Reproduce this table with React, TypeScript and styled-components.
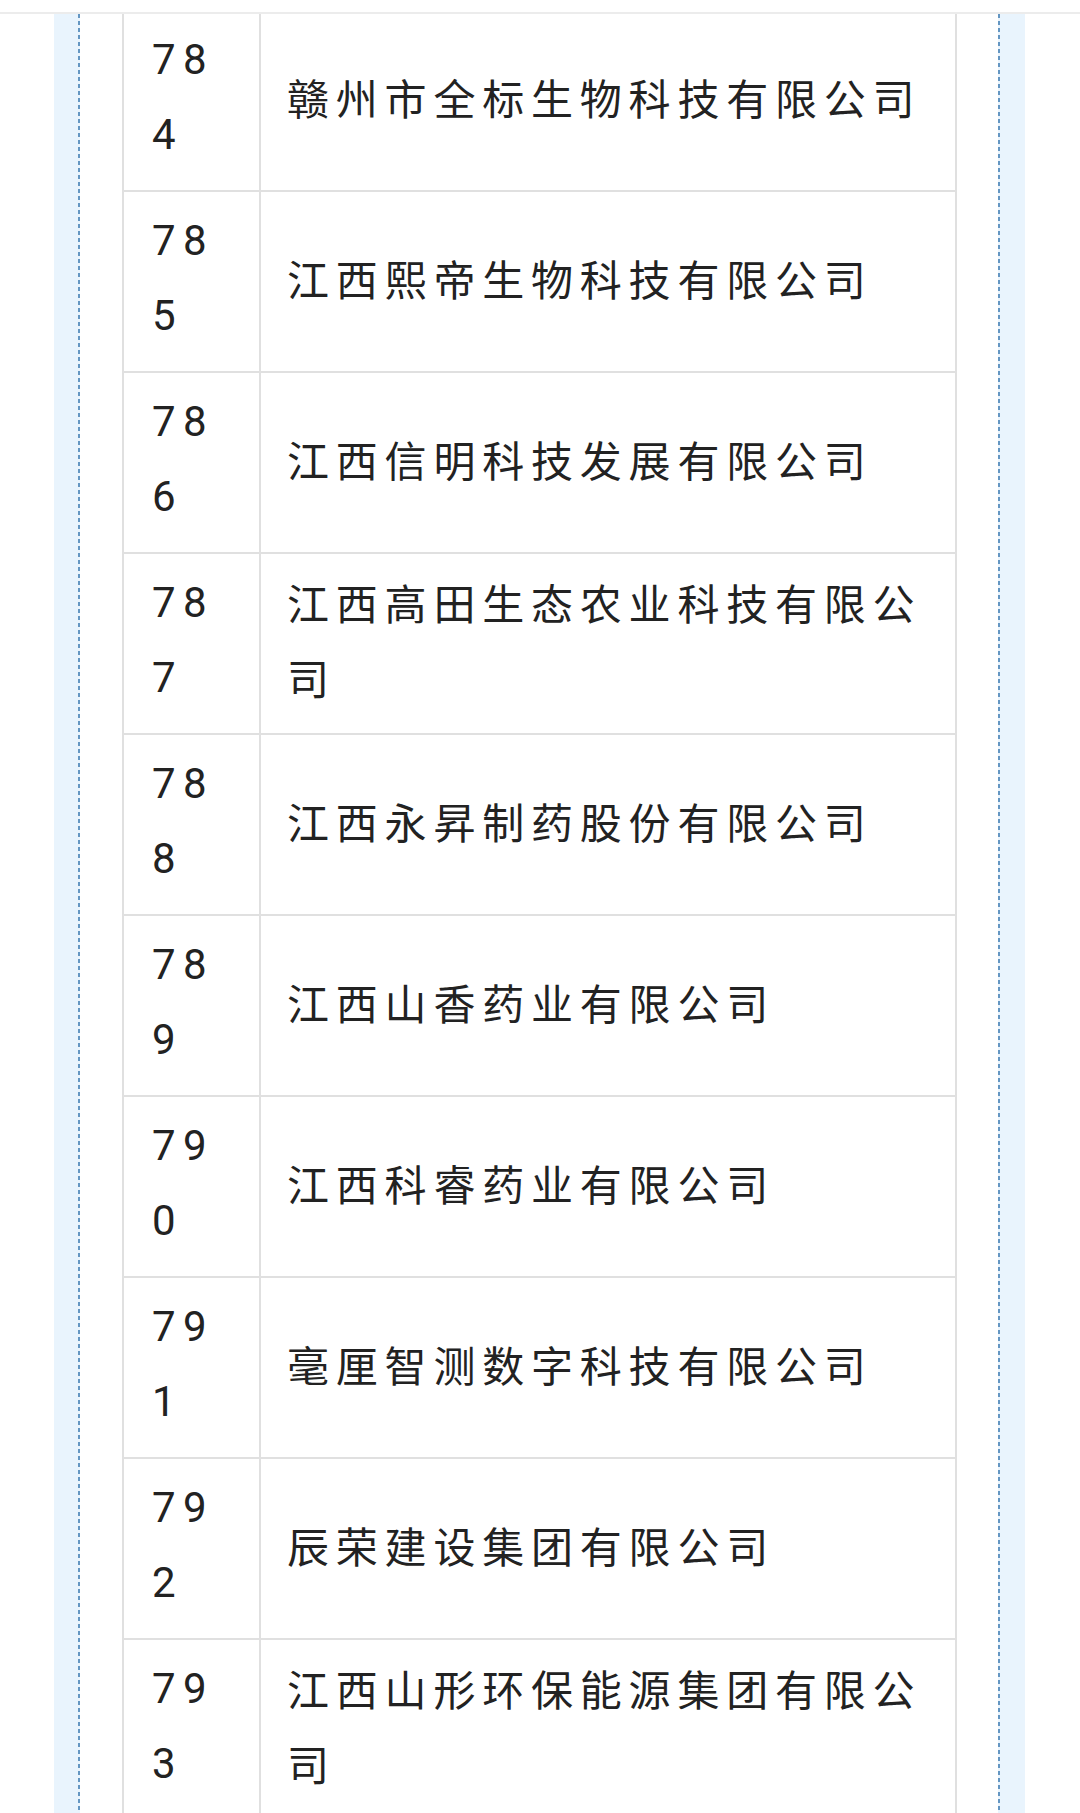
import React from "react";
import styled, { createGlobalStyle } from "styled-components";

const GlobalStyle = createGlobalStyle`
  html, body {
    margin: 0;
    padding: 0;
    background: #ffffff;
  }
  body {
    font-family: Roboto, "Noto Sans CJK SC", "Noto Sans", sans-serif;
    color: #222222;
  }
`;

const Page = styled.div`
  width: 1080px;
  height: 1813px;
  display: flex;
  flex-direction: column;
  overflow: hidden;
  background: #ffffff;
`;

const TopBar = styled.div`
  height: 12px;
  flex: none;
  border-bottom: 2px solid #ececec;
  background: #ffffff;
`;

const Main = styled.div`
  flex: 1;
  display: flex;
  padding: 0 55px 0 54px;
  overflow: hidden;
`;

const Rail = styled.div<{ $side: "left" | "right" }>`
  flex: none;
  width: ${(p) => (p.$side === "left" ? "26px" : "27px")};
  background-color: #e9f4fd;
  background-image: repeating-linear-gradient(
    to bottom,
    #6496c2 0 4px,
    transparent 4px 7px
  );
  background-size: 2px 100%;
  background-repeat: no-repeat;
  background-position: ${(p) => (p.$side === "left" ? "24px 0" : "0 0")};
`;

const Content = styled.div`
  flex: 1;
  padding: 0 41px 0 42px;
  overflow: hidden;
`;

const Table = styled.table`
  width: 835px;
  margin-top: -5px;
  border-collapse: separate;
  border-spacing: 0;
  border-left: 2px solid #e0e0e0;
  border-top: 2px solid #e0e0e0;
  font-size: 42px;
  line-height: 75px;
  table-layout: fixed;
`;

const Row = styled.tr``;

const Cell = styled.td`
  border-right: 2px solid #e0e0e0;
  border-bottom: 2px solid #e0e0e0;
  padding: 10px 14px 19px 26px;
  vertical-align: middle;
  color: #222222;
  letter-spacing: 6.8px;
  font-family: "Noto Sans CJK SC", Roboto, sans-serif;
  word-break: break-all;
`;

const NumCell = styled(Cell)`
  width: 75px;
  padding: 11px 32px 18px 28px;
  letter-spacing: 7.5px;
  font-family: Roboto, "Noto Sans", sans-serif;
  vertical-align: top;
`;

const rows: [string, string][] = [
  ["784", "赣州市全标生物科技有限公司"],
  ["785", "江西熙帝生物科技有限公司"],
  ["786", "江西信明科技发展有限公司"],
  ["787", "江西高田生态农业科技有限公司"],
  ["788", "江西永昇制药股份有限公司"],
  ["789", "江西山香药业有限公司"],
  ["790", "江西科睿药业有限公司"],
  ["791", "毫厘智测数字科技有限公司"],
  ["792", "辰荣建设集团有限公司"],
  ["793", "江西山形环保能源集团有限公司"],
];

export default function App() {
  return (
    <>
      <GlobalStyle />
      <Page>
        <TopBar />
        <Main>
          <Rail $side="left" />
          <Content>
            <Table>
              <colgroup>
                <col style={{ width: 137 }} />
                <col />
              </colgroup>
              <tbody>
                {rows.map(([n, name]) => (
                  <Row key={n}>
                    <NumCell>{n}</NumCell>
                    <Cell>{name}</Cell>
                  </Row>
                ))}
              </tbody>
            </Table>
          </Content>
          <Rail $side="right" />
        </Main>
      </Page>
    </>
  );
}
